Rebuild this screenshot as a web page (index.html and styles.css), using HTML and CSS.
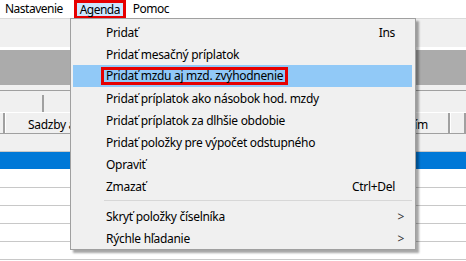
FILE: index.html
```html
<!DOCTYPE html>
<html lang="sk">

<head>
    <meta charset="UTF-8">
    <meta name="viewport" content="width=device-width, initial-scale=1.0">
    <title>Agenda</title>
    <link rel="stylesheet" href="styles.css">
</head>

<body>
    <div class="app">
        <!--hlavne menu-->
        <div class="menubar">
            <span class="mitem">Nastavenie</span>
            <span class="mitem open">Agenda</span>
            <span class="mitem">Pomoc</span>
        </div>
        <div class="toolbar"></div>
        <div class="band"></div>
        <div class="head1">
            <div class="hc first"></div>
            <div class="hc"></div>
        </div>
        <div class="head2">
            <div class="tab stub"></div>
            <div class="tab main"><span>Sadzby a</span><span>ím</span></div>
            <div class="tab"></div>
        </div>
        <div class="gap"></div>
        <ul class="rows">
            <li class="sel"></li>
            <li></li>
            <li></li>
            <li></li>
            <li></li>
            <li></li>
        </ul>

        <!--rozbalene menu Agenda-->
        <ul class="dropdown">
            <li><span class="label">Pridať</span><span class="key">Ins</span></li>
            <li><span class="label">Pridať mesačný príplatok</span></li>
            <li class="hover"><span class="label marked">Pridať mzdu aj mzd. zvýhodnenie</span></li>
            <li><span class="label">Pridať príplatok ako násobok hod. mzdy</span></li>
            <li><span class="label">Pridať príplatok za dlhšie obdobie</span></li>
            <li><span class="label">Pridať položky pre výpočet odstupného</span></li>
            <li><span class="label">Opraviť</span></li>
            <li><span class="label">Zmazať</span><span class="key">Ctrl+Del</span></li>
            <li class="sep"></li>
            <li><span class="label">Skryť položky číselníka</span><span class="arrow">&gt;</span></li>
            <li><span class="label">Rýchle hľadanie</span><span class="arrow">&gt;</span></li>
        </ul>
    </div>
</body>

</html>
```

FILE: styles.css
```css
* {
    margin: 0;
    padding: 0;
    list-style: none;
    box-sizing: border-box;
}

body {
    font-family: "Noto Sans", "Liberation Sans", sans-serif;
    font-size: 12px;
    letter-spacing: -0.3px;
    color: #000;
    background: #fff;
}

.app {
    position: relative;
    width: 466px;
    height: 261px;
    overflow: hidden;
}

.menubar {
    display: flex;
    height: 19px;
    background: #fff;
    border-bottom: 1px solid #dadada;
    letter-spacing: -0.5px;
}

.mitem {
    height: 19px;
    line-height: 18px;
    padding: 0 5px;
}

.mitem.open {
    width: 52px;
    margin-left: 6px;
    margin-right: 2px;
    padding: 0;
    text-align: center;
    background: #cce8ff;
    border: 3px solid #e60000;
    line-height: 13px;
}

.toolbar {
    height: 31px;
    background: #f0f0f0;
    border-bottom: 3px solid #fff;
}

.band {
    height: 40px;
    background: #ababab;
    border-bottom: 5px solid #f0f0f0;
}

.head1 {
    display: flex;
    height: 22px;
    background: #f0f0f0;
    border-top: 1px solid #a0a0a0;
    padding-top: 4px;
}

.head1 .hc {
    flex: 1;
}

.head1 .hc.first {
    flex: 0 0 44px;
    border-right: 2px solid #a0a0a0;
}

.head2 {
    display: flex;
    height: 21px;
    background: #f0f0f0;
    border-top: 1px solid #fff;
}

.tab {
    flex: 1;
    border-left: 1px solid #fff;
    border-right: 2px solid #a0a0a0;
}

.tab.stub {
    flex: 0 0 5px;
    border-left: 0;
}

.tab.main {
    flex: 0 0 445px;
    display: flex;
    justify-content: space-between;
    padding: 3px 20px 0 22px;
}

.gap {
    height: 18px;
    background: #f0f0f0;
    border-top: 1px solid #a0a0a0;
}

.rows li {
    height: 18px;
    border-bottom: 1px solid #c8c8c8;
}

.rows li.sel {
    height: 19px;
    background: #0078d7;
    border-top: 1px solid #c8c8c8;
    border-bottom: 1px solid #fff;
}

.dropdown {
    position: absolute;
    left: 70px;
    top: 18px;
    width: 346px;
    padding: 2px 3px 0 2px;
    background: #f0f0f0;
    border: 1px solid #a0a0a0;
    box-shadow: 3px 3px 2px rgba(0, 0, 0, .35);
}

.dropdown li {
    display: flex;
    align-items: center;
    height: 22px;
    padding: 0 17px 0 33px;
}

.dropdown li.hover {
    background: #91c9f7;
}

.dropdown .label {
    flex: 1;
}

.dropdown .marked {
    flex: 0 0 auto;
    border: 3px solid #e60000;
    margin-left: -5px;
    padding: 0 2px;
    line-height: 12px;
}

.dropdown .key {
    text-align: right;
}

.dropdown .arrow {
    margin-right: -9px;
    color: #333;
}

.dropdown li.sep {
    height: 5px;
    padding: 0;
    margin: 3px 0 0 31px;
    border-top: 1px solid #d7d7d7;
}
```
